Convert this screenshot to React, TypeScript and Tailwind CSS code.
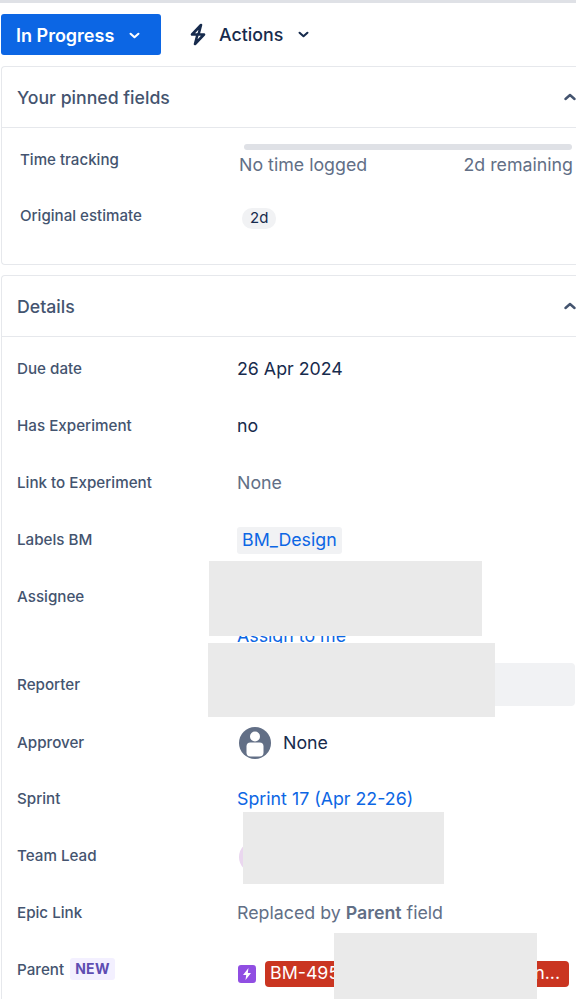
import React from "react";

const Chevron = ({ up, className }: { up?: boolean; className?: string }) => (
  <svg viewBox="0 0 12 8" className={className} fill="none" stroke="currentColor" strokeWidth="2.4" strokeLinecap="round" strokeLinejoin="round">
    <path d={up ? "M1.5 6L6 2l4.5 4" : "M1.5 2L6 6l4.5-4"} />
  </svg>
);

const Row = ({ label, h, children }: { label: string; h: string; children?: React.ReactNode }) => (
  <div className={`flex items-center ${h}`}>
    <div className="w-[235px] pl-[15px] pt-[2px] text-[15.2px] font-medium text-[#44546f] shrink-0">
      <span>{label}</span>
    </div>
    <div className="flex-1 min-w-0 pt-[2px] text-[17.8px] text-[#172b4d]">{children}</div>
  </div>
);

const Header = ({ title }: { title: string }) => (
  <div className="h-[61px] flex items-center justify-between pl-[15px] pr-0 border-b border-[#e6e8ec]">
    <span className="pt-[2px] text-[17.7px] font-medium text-[#44546f]">{title}</span>
    <Chevron up className="w-[12px] h-[8px] text-[#44546f]" />
  </div>
);

export default function App() {
  return (
    <div className="relative w-[576px] h-[999px] overflow-hidden bg-white font-['Inter',sans-serif]">
      <div className="h-[3px] bg-[#dfe1e6]" />
      <div className="flex items-center h-[41px] mt-[11px] pl-[1px]">
        <button className="w-[160px] h-[41px] rounded-[3px] bg-[#0c66e4] text-white text-[18px] font-semibold flex items-center pl-[15px] pt-[1px]">
          In Progress
          <Chevron className="w-[11px] h-[7px] ml-[15px] text-white" />
        </button>
        <div className="flex items-center ml-[29px] text-[#172b4d]">
          <svg viewBox="0 0 16 25" className="w-[16px] h-[25px]" fill="none" stroke="currentColor" strokeWidth="2.6" strokeLinejoin="round" strokeLinecap="round">
            <path d="M11 3L2 12.5H7.5L5 22L14 12.5H8.5Z" />
          </svg>
          <span className="ml-[13px] pt-[2px] text-[17.8px] font-medium">Actions</span>
          <Chevron className="w-[11px] h-[7px] ml-[15px] text-[#172b4d]" />
        </div>
      </div>

      <div className="mt-[11px] ml-[1px] h-[199px] rounded-tl-[4px] rounded-bl-[4px] border border-r-0 border-[#e6e8ec]">
        <Header title="Your pinned fields" />
        <div className="flex h-[59px] pt-[16px]">
          <div className="w-[237px] pl-[18px] pt-[1px] text-[15.1px] font-medium text-[#44546f] leading-[30px]">Time tracking</div>
          <div className="w-[334px]">
            <div className="ml-[5px] h-[6px] rounded-[3px] bg-[#dfe1e6] mr-[1px]" />
            <div className="flex justify-between text-[17.8px] text-[#626f86] leading-[26px] mt-[2px]">
              <span>No time logged</span>
              <span>2d remaining</span>
            </div>
          </div>
        </div>
        <div className="flex items-center h-[56px]">
          <div className="w-[240px] pl-[18px] pt-[2px] text-[15.1px] font-medium text-[#44546f]">Original estimate</div>
          <span className="inline-flex items-center h-[21px] mt-[6px] px-[8px] rounded-[10px] bg-[#f1f2f4] text-[15px] text-[#172b4d]">2d</span>
        </div>
      </div>

      <div className="mt-[10px] ml-[1px] h-[760px] rounded-tl-[4px] border border-r-0 border-[#e6e8ec]">
        <Header title="Details" />
        <div className="pt-[3px]">
          <Row label="Due date" h="h-[57px]">26 Apr 2024</Row>
          <Row label="Has Experiment" h="h-[57px]">no</Row>
          <Row label="Link to Experiment" h="h-[57px]"><span className="text-[#626f86]">None</span></Row>
          <Row label="Labels BM" h="h-[57px]">
            <span className="inline-flex items-center h-[27px] px-[5px] rounded-[3px] bg-[#f1f2f4] text-[#0c66e4]">BM_Design</span>
          </Row>
          <div className="flex h-[95px]">
            <div className="w-[235px] pl-[15px] pt-[18px] text-[15.2px] font-medium text-[#44546f] leading-[22px]">Assignee</div>
            <div className="pt-[56px] text-[17.8px] text-[#0c66e4] leading-[24px]">Assign to me</div>
          </div>
          <div className="flex items-center h-[43px]">
            <div className="w-[235px] pl-[15px] pt-[2px] text-[15.2px] font-medium text-[#44546f]">Reporter</div>
            <div className="w-[338px] h-[43px] rounded-[4px] bg-[#f1f2f4]" />
          </div>
          <div className="flex items-center h-[73px]">
            <div className="w-[235px] pl-[15px] pt-[2px] text-[15.2px] font-medium text-[#44546f]">Approver</div>
            <svg viewBox="0 0 32 34" className="w-[32px] h-[34px] ml-[2px]">
              <circle cx="16" cy="17" r="16" fill="#626f86" />
              <circle cx="16" cy="10.5" r="5" fill="#fff" />
              <rect x="7.5" y="16.5" width="17" height="14" rx="4" fill="#fff" />
            </svg>
            <span className="ml-[12px] pt-[2px] text-[17.8px] text-[#172b4d]">None</span>
          </div>
          <Row label="Sprint" h="h-[38px]"><span className="text-[#0c66e4]">Sprint 17 (Apr 22-26)</span></Row>
          <div className="flex items-center h-[76px]">
            <div className="w-[235px] pl-[15px] pt-[2px] text-[15.2px] font-medium text-[#44546f]">Team Lead</div>
            <div className="w-[32px] h-[32px] mt-[4px] ml-[2px] rounded-full bg-[#ead7ef]" />
          </div>
          <Row label="Epic Link" h="h-[38px]">
            <span className="text-[#626f86]">Replaced by <b className="font-semibold">Parent</b> field</span>
          </Row>
          <div className="flex items-center h-[76px]">
            <div className="w-[235px] pl-[15px] flex items-center gap-[6px] text-[15.2px] font-medium text-[#44546f]">
              <span className="pt-[2px]">Parent</span>
              <span className="inline-flex items-center h-[22px] px-[5px] rounded-[3px] bg-[#f3f0ff] text-[14px] font-bold text-[#5e4db2] tracking-[0.3px]">NEW</span>
            </div>
            <svg viewBox="0 0 18 18" className="w-[18px] h-[18px] ml-[1px] mt-[9px]">
              <rect width="18" height="18" rx="3" fill="#904ee2" />
              <path d="M10.5 3L5 10h3.2L7.5 15 13 8H9.8z" fill="#fff" />
            </svg>
            <span className="ml-[9px] mt-[9px] w-[304px] h-[26px] rounded-[4px] bg-[#ca3521] text-white text-[17.8px] pl-[5px] pr-[9px] flex items-center justify-between">
              <span>BM-495</span>
              <span>n...</span>
            </span>
          </div>
        </div>
      </div>

      <div className="absolute left-[209px] top-[561px] w-[273px] h-[75px] bg-[#eaeaea]" />
      <div className="absolute left-[208px] top-[643px] w-[287px] h-[74px] bg-[#eaeaea]" />
      <div className="absolute left-[243px] top-[812px] w-[201px] h-[72px] bg-[#eaeaea]" />
      <div className="absolute left-[334px] top-[933px] w-[203px] h-[66px] bg-[#eaeaea]" />
    </div>
  );
}
